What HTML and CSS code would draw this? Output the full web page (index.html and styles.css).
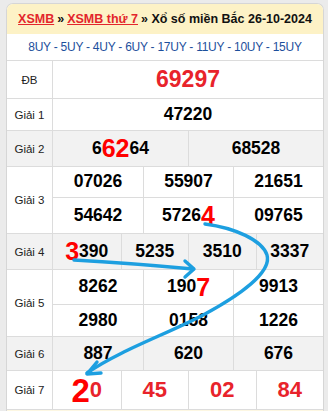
FILE: index.html
```html
<!DOCTYPE html>
<html lang="vi">
<head>
<meta charset="utf-8">
<title>XSMB thứ 7</title>
<link rel="stylesheet" href="styles.css">
</head>
<body>
<div class="page">
  <div class="card">
    <div class="head"><a class="lnk" href="#">XSMB</a> » <a class="lnk" href="#">XSMB thứ 7</a> » Xổ số miền Bắc 26-10-2024</div>
    <div class="codes">8UY - 5UY - 4UY - 6UY - 17UY - 11UY - 10UY - 15UY</div>

    <div class="row h-db">
      <div class="lbl">ĐB</div>
      <div class="vals"><div class="sub c1"><div class="v db">69297</div></div></div>
    </div>

    <div class="row h-g1">
      <div class="lbl">Giải 1</div>
      <div class="vals"><div class="sub c1"><div class="v">47220</div></div></div>
    </div>

    <div class="row alt h-g2">
      <div class="lbl">Giải 2</div>
      <div class="vals"><div class="sub c2">
        <div class="v">6<span class="hl">62</span>64</div>
        <div class="v">68528</div>
      </div></div>
    </div>

    <div class="row h-g3">
      <div class="lbl">Giải 3</div>
      <div class="vals">
        <div class="sub c3 s-30">
          <div class="v">07026</div><div class="v">55907</div><div class="v">21651</div>
        </div>
        <div class="sub c3 s-36 bt">
          <div class="v">54642</div><div class="v">5726<span class="hl">4</span></div><div class="v">09765</div>
        </div>
      </div>
    </div>

    <div class="row alt h-g4">
      <div class="lbl">Giải 4</div>
      <div class="vals"><div class="sub c4">
        <div class="v"><span class="hl">3</span>390</div><div class="v">5235</div><div class="v">3510</div><div class="v">3337</div>
      </div></div>
    </div>

    <div class="row h-g5">
      <div class="lbl">Giải 5</div>
      <div class="vals">
        <div class="sub c3 s-34">
          <div class="v">8262</div><div class="v">190<span class="hl">7</span></div><div class="v">9913</div>
        </div>
        <div class="sub c3 s-32 bt">
          <div class="v">2980</div><div class="v">0158</div><div class="v">1226</div>
        </div>
      </div>
    </div>

    <div class="row alt h-g6">
      <div class="lbl">Giải 6</div>
      <div class="vals"><div class="sub c3">
        <div class="v">887</div><div class="v">620</div><div class="v">676</div>
      </div></div>
    </div>

    <div class="row h-g7">
      <div class="lbl">Giải 7</div>
      <div class="vals"><div class="sub c4">
        <div class="v red"><span class="hl big">2</span>0</div><div class="v red">45</div><div class="v red">02</div><div class="v red">84</div>
      </div></div>
    </div>
    <div class="foot"></div>
  </div>

  <svg class="arrows" width="328" height="411" viewBox="0 0 328 411" fill="none" stroke="#1d9fe0" stroke-width="3.4" stroke-linecap="round" stroke-linejoin="round">
    <path d="M74 260 C110 262 150 265 193 269"/>
    <path d="M185 261 L194 269 L185 277"/>
    <path d="M205 224 C235 228 262 240 267 255 C272 272 240 295 205 314 C170 333 120 350 87 373"/>
    <path d="M97 362 L87 374 L101 373"/>
  </svg>
</div>
</body>
</html>
```

FILE: styles.css
```css
* { box-sizing: border-box; }
html, body { margin: 0; padding: 0; }
body {
  background: #ebebeb;
  font-family: "Liberation Sans", Arial, sans-serif;
  width: 328px;
  height: 411px;
  overflow: hidden;
}
.page { position: relative; width: 328px; height: 411px; padding: 3px 4px 0 6px; }
.card {
  background: #fff;
  border: 1px solid #d6d6d6;
  border-bottom: none;
  border-radius: 7px 7px 0 0;
  overflow: hidden;
}
.head {
  height: 30px;
  background: #fdf2c6;
  display: flex;
  align-items: center;
  justify-content: center;
  font-size: 12.5px;
  font-weight: bold;
  color: #111;
  white-space: nowrap;
  word-spacing: 0;
}
.lnk { color: #e3262c; text-decoration: underline; margin: 0 3px; }
.lnk:first-child { margin-left: 0; }
.codes {
  height: 26px;
  display: flex;
  align-items: center;
  justify-content: center;
  font-size: 12px;
  letter-spacing: -0.25px;
  color: #1d4f9c;
  white-space: nowrap;
}
.row {
  display: grid;
  grid-template-columns: 46px 1fr;
  border-top: 1px solid #dcdcdc;
}
.row.alt { background: #f2f2f2; }
.lbl {
  border-right: 1px solid #dcdcdc;
  display: flex;
  align-items: center;
  justify-content: center;
  font-size: 11.5px;
  color: #222;
}
.vals { display: flex; flex-direction: column; }
.sub { display: grid; flex: 1; }
.sub.bt { border-top: 1px solid #dcdcdc; flex: none; }
.c1 { grid-template-columns: 1fr; }
.c2 { grid-template-columns: 1fr 1fr; }
.c3 { grid-template-columns: 1fr 1fr 1fr; }
.c4 { grid-template-columns: 1fr 1fr 1fr 1fr; }
.v {
  display: flex;
  align-items: center;
  justify-content: center;
  font-size: 17.5px;
  font-weight: bold;
  color: #000;
  line-height: 1;
  white-space: nowrap;
}
.v + .v { border-left: 1px solid #dcdcdc; }
.v.db { font-size: 23px; color: #e8232b; }
.v.red { font-size: 22px; color: #e8232b; }
.hl { font-size: 25px; color: #ff0000; line-height: 1; }
.hl.big { font-size: 33px; }
.h-db { height: 38px; }
.h-g1 { height: 32px; }
.h-g2 { height: 36px; }
.h-g3 { height: 67px; }
.h-g4 { height: 36px; }
.h-g5 { height: 67px; }
.h-g6 { height: 34px; }
.h-g7 { height: 39px; }
.s-30 { flex: none; height: 30px; }
.s-36 { height: 36px; }
.s-34 { flex: none; height: 34px; }
.s-32 { height: 32px; }
.foot { height: 6px; border-top: 1px solid #dcdcdc; background: #fdf7e2; }
.arrows { position: absolute; left: 0; top: 0; pointer-events: none; }
```
